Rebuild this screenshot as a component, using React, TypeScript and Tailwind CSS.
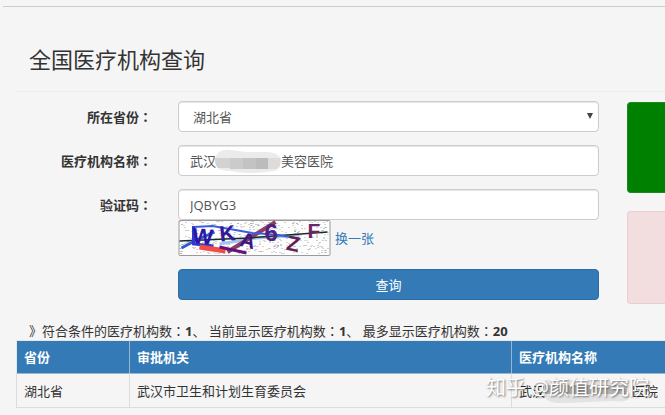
import React, { useState } from "react";

const PROVINCES = ["湖北省", "湖南省", "河南省"];

const SPECK_COLORS = ["#2f8f48", "#c2405c", "#4a52c4", "#777777", "#3aa098", "#b08f3a"];

// Seeded generator, so the captcha noise stays the same between renders
function makeSpecks(count: number) {
  let seed = 2017;
  const next = (max: number) => {
    seed = (seed * 16807) % 2147483647;
    return seed % max;
  };
  return Array.from({ length: count }, () => ({
    x: 1 + next(149),
    y: 1 + next(33),
    color: SPECK_COLORS[next(SPECK_COLORS.length)],
  }));
}

const SPECKS = makeSpecks(380);

const inputClass =
  "block h-[31px] w-full rounded border border-[#ccc] bg-white text-[13px] text-[#555] shadow-[inset_0_1px_1px_rgba(0,0,0,0.1)] outline-none focus:border-[#66afe9]";

// The JP face sets the full-width colon in the middle of its box
function Colon() {
  return <span className="font-['Noto_Sans_CJK_JP',sans-serif]">：</span>;
}

function FormRow({ id, label, children }: { id: string; label: string; children: React.ReactNode }) {
  return (
    <div className="flex">
      <label htmlFor={id} className="w-[136px] shrink-0 pt-[6px] text-right font-bold leading-5">
        {label}
        <Colon />
      </label>
      <div className="ml-[26px] min-w-0 flex-1">{children}</div>
    </div>
  );
}

function Captcha() {
  return (
    <svg
      width="153"
      height="36"
      viewBox="0 0 152 36"
      role="img"
      aria-label="验证码图片"
      fontFamily="'Liberation Sans', Arial, sans-serif"
      fontWeight="bold"
    >
      <rect x="0.5" y="0.5" width="151" height="35" rx="1" fill="#fdfdfd" stroke="#9a9a9a" />
      {SPECKS.map((s, i) => (
        <rect key={i} x={s.x} y={s.y} width="1" height="1" fill={s.color} opacity="0.6" />
      ))}
      <g fill="none">
        <path d="M41 24L78 18L121 15" stroke="#a5c4ee" strokeWidth="3" />
        <path d="M49 32L97 2" stroke="#893f66" strokeWidth="4" />
        <path d="M1 21L70 18L149 12" stroke="#1d2b24" strokeWidth="1.5" />
        <path d="M15 7L34 6L74 13L100 15L122 19" stroke="#3d5ce0" strokeWidth="2" />
        <path d="M3 28L16 21L36 12" stroke="#3458d2" strokeWidth="3" />
        <path d="M15 6V24L35 26" stroke="#2f38cf" strokeWidth="3" />
        <path d="M21 27L47 31" stroke="#f34b45" strokeWidth="5" />
        <path d="M41 27L68 33" stroke="#651278" strokeWidth="3" />
      </g>
      <text x="14" y="24" fontSize="22" fill="#2a16a6" transform="rotate(5 25 16)">W</text>
      <text x="41" y="21" fontSize="22" fill="#30189b" transform="rotate(-6 48 13)">K</text>
      <text x="62" y="28" fontSize="21" fill="#3d1782" transform="rotate(14 70 20)">A</text>
      <text x="86" y="21" fontSize="24" fill="#52207f">6</text>
      <text x="108" y="31" fontSize="21" fill="#662053" transform="rotate(12 114 25)">Z</text>
      <text x="129" y="18" fontSize="21" fill="#6b2468">F</text>
    </svg>
  );
}

function QueryForm() {
  const [province, setProvince] = useState("湖北省");
  const [name, setName] = useState("武汉\u3000\u3000\u3000\u3000\u3000美容医院");
  const [code, setCode] = useState("JQBYG3");

  return (
    <form className="min-w-0 flex-1" onSubmit={(e) => e.preventDefault()}>
      <div className="space-y-[13px]">
        <FormRow id="province" label="所在省份">
          <div className="relative">
            <select
              id="province"
              value={province}
              onChange={(e) => setProvince(e.target.value)}
              className={`${inputClass} appearance-none px-[14px]`}
            >
              {PROVINCES.map((p) => (
                <option key={p}>{p}</option>
              ))}
            </select>
            <svg
              className="pointer-events-none absolute right-[6px] top-[12px]"
              width="6"
              height="6"
              viewBox="0 0 6 6"
              fill="#444"
            >
              <path d="M0 0H6L3 6Z" />
            </svg>
          </div>
        </FormRow>

        <FormRow id="name" label="医疗机构名称">
          <div className="relative">
            <input
              id="name"
              value={name}
              onChange={(e) => setName(e.target.value)}
              className={`${inputClass} px-[11px]`}
            />
            <svg
              className="pointer-events-none absolute left-[36px] top-[4px]"
              width="68"
              height="25"
              viewBox="0 0 68 25"
            >
              <path d="M4 4Q9 0 17 1L32 3L52 3Q64 3 67 10Q68 20 60 22Q35 26 17 22Q0 22 1 12Q1 7 4 4Z" fill="#ebebeb" />
              <path d="M1 9H16V19H4Q1 16 1 9Z" fill="#d2d2d2" />
              <path d="M16 9H29V20H16Z" fill="#cbcbcb" />
              <path d="M29 9H42V20H29Z" fill="#c3c3c3" />
              <path d="M42 9H54V20H42Z" fill="#bcbcbc" />
              <path d="M54 9H66V17L62 20H54Z" fill="#dcdcdc" />
            </svg>
          </div>
        </FormRow>

        <FormRow id="code" label="验证码">
          <input
            id="code"
            value={code}
            onChange={(e) => setCode(e.target.value)}
            className={`${inputClass} px-[11px]`}
          />
          <div className="flex items-center gap-1">
            <Captcha />
            <a href="#" className="text-[#337ab7] hover:underline">
              换一张
            </a>
          </div>
        </FormRow>
      </div>

      <button
        type="submit"
        className="ml-[162px] mt-[13px] block h-[31px] w-[calc(100%-162px)] rounded border border-[#2e6da4] bg-[#337ab7] text-[13px] text-white hover:bg-[#286090]"
      >
        查询
      </button>
    </form>
  );
}

function ResultTable() {
  return (
    <table className="w-full table-fixed border-collapse text-left">
      <thead>
        <tr className="h-[33px] bg-[#337ab7] text-white">
          <th className="w-[113px] border border-[#ddd]/60 px-[7px]">省份</th>
          <th className="w-[382px] border border-[#ddd]/60 px-[7px]">审批机关</th>
          <th className="border border-r-0 border-[#ddd]/60 px-[7px]">医疗机构名称</th>
        </tr>
      </thead>
      <tbody>
        <tr className="h-[34px]">
          <td className="border border-[#ddd] px-[7px]">湖北省</td>
          <td className="border border-[#ddd] px-[7px]">武汉市卫生和计划生育委员会</td>
          <td className="border border-r-0 border-[#ddd] pl-[7px]">
            <div className="flex items-center">
              <span>武汉</span>
              <svg className="-my-1 shrink-0" width="87" height="27" viewBox="0 0 87 27">
                <path d="M0 3H84V20Q82 26 70 24L20 26Q0 27 0 18Z" fill="#e3e3e3" />
                <path d="M0 8H82V17H0Z" fill="#b5b5b5" />
                <path d="M22 8H48V17H22Z" fill="#a8a8a8" />
              </svg>
              <span>医院</span>
            </div>
          </td>
        </tr>
      </tbody>
    </table>
  );
}

export default function App() {
  return (
    <div className="relative min-h-screen overflow-hidden bg-[#f5f5f5] pt-[6px] font-['Open_Sans','Noto_Sans_CJK_SC',sans-serif] text-[13px] leading-5 text-[#333]">
      <div className="ml-[3px] border-t border-[#ccc]" />

      <main className="pl-4">
        <h1 className="border-b border-[#eee] pb-[18px] pl-[13px] pt-[38px] text-[22px] leading-7">
          全国医疗机构查询
        </h1>

        <div className="mt-[9px] flex gap-[28px]">
          <QueryForm />
          <aside className="w-[38px] shrink-0 pt-px">
            <div className="h-[91px] rounded-l border border-r-0 border-[#1c8a1c] bg-[#008000]" />
            <div className="mt-[18px] h-[93px] rounded-l border border-r-0 border-[#ebccd1] bg-[#f2dede]" />
          </aside>
        </div>

        <p className="mb-px mt-[19px] whitespace-pre pl-[13px] leading-4">
          》符合条件的医疗机构数
          <Colon />
          <b>1</b>、 当前显示医疗机构数
          <Colon />
          <b>1</b>、 最多显示医疗机构数
          <Colon />
          <b>20</b>
        </p>
        <ResultTable />
      </main>

      <div className="pointer-events-none absolute right-[16px] top-[376px] whitespace-nowrap text-[20px] leading-6 text-white [text-shadow:1px_1px_2px_rgba(0,0,0,0.5)]">
        知乎 @颜值研究院
      </div>
    </div>
  );
}
